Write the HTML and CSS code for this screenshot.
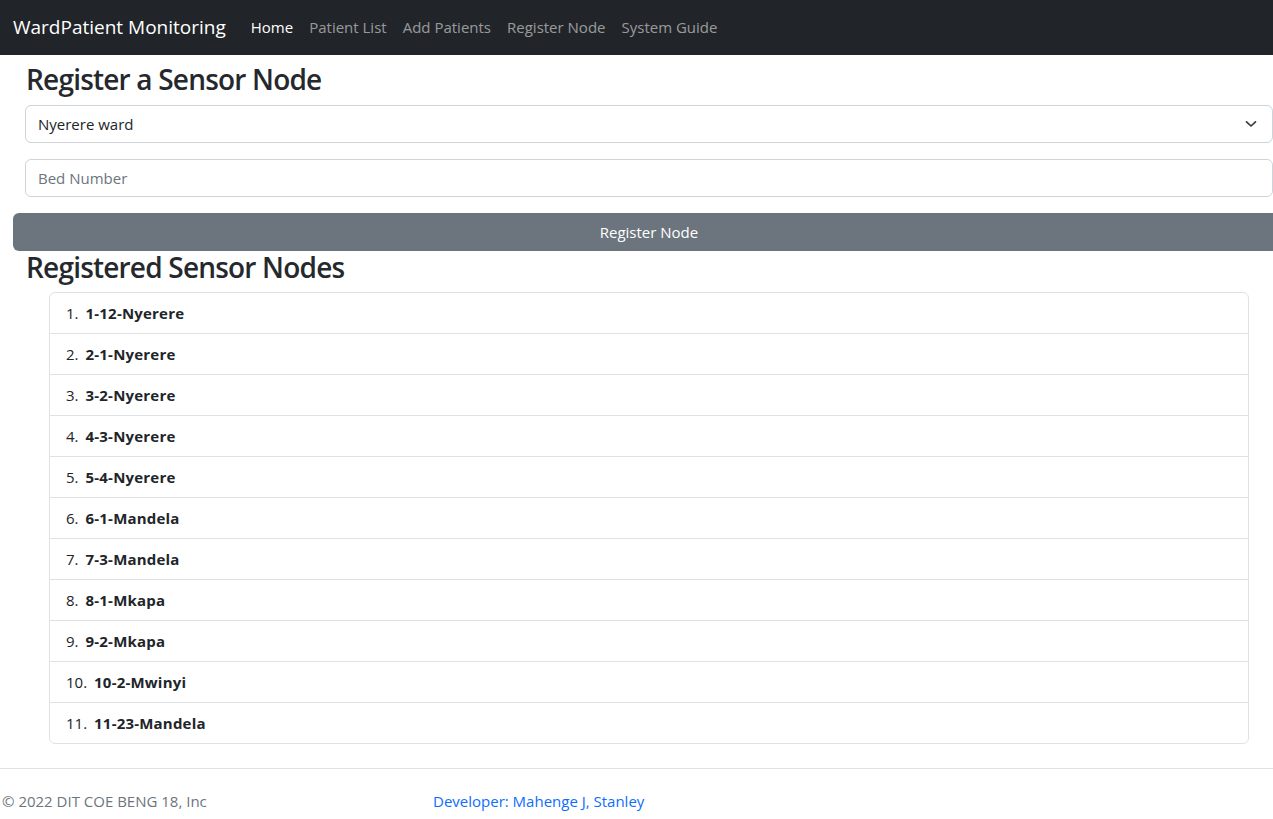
FILE: index.html
```html
<!DOCTYPE html>
<html lang="en">
<head>
<meta charset="utf-8">
<title>WardPatient Monitoring</title>
<link rel="stylesheet" href="styles.css">
</head>
<body>
<nav class="navbar">
  <span class="brand">WardPatient Monitoring</span>
  <ul class="nav">
    <li><a class="nav-link active">Home</a></li>
    <li><a class="nav-link">Patient List</a></li>
    <li><a class="nav-link">Add Patients</a></li>
    <li><a class="nav-link">Register Node</a></li>
    <li><a class="nav-link">System Guide</a></li>
  </ul>
</nav>
<main class="main">
  <section class="form-area">
    <h2 class="title">Register a Sensor Node</h2>
    <div class="select">
      <span>Nyerere ward</span>
      <svg class="chev" width="12" height="8" viewBox="0 0 12 8"><path d="M1.5 1.8l4.5 4.2 4.5-4.2" fill="none" stroke="#343a40" stroke-width="1.7" stroke-linecap="round" stroke-linejoin="round"/></svg>
    </div>
    <div class="input">Bed Number</div>
  </section>
  <div class="btn">Register Node</div>
  <section class="list-area">
    <h2 class="title title-list">Registered Sensor Nodes</h2>
    <ol class="list">
      <li><span class="num">1.</span><b>1-12-Nyerere</b></li>
      <li><span class="num">2.</span><b>2-1-Nyerere</b></li>
      <li><span class="num">3.</span><b>3-2-Nyerere</b></li>
      <li><span class="num">4.</span><b>4-3-Nyerere</b></li>
      <li><span class="num">5.</span><b>5-4-Nyerere</b></li>
      <li><span class="num">6.</span><b>6-1-Mandela</b></li>
      <li><span class="num">7.</span><b>7-3-Mandela</b></li>
      <li><span class="num">8.</span><b>8-1-Mkapa</b></li>
      <li><span class="num">9.</span><b>9-2-Mkapa</b></li>
      <li><span class="num">10.</span><b>10-2-Mwinyi</b></li>
      <li><span class="num">11.</span><b>11-23-Mandela</b></li>
    </ol>
  </section>
</main>
<footer class="footer">
  <span class="copy">© 2022 DIT COE BENG 18, Inc</span>
  <a class="dev">Developer: Mahenge J, Stanley</a>
</footer>
</body>
</html>
```
FILE: styles.css
```css
* { box-sizing: border-box; }
html, body { margin: 0; padding: 0; }
body {
  font-family: "Open Sans", "Noto Sans", sans-serif;
  font-size: 15px;
  line-height: 1.5;
  color: #212529;
  background: #fff;
  width: 1273px;
  overflow: hidden;
}
.navbar {
  height: 55px;
  background: #212529;
  display: flex;
  align-items: center;
  padding: 0 13px;
}
.brand {
  color: #fff;
  font-size: 19px;
  margin-right: 17px;
  white-space: nowrap;
}
.nav {
  display: flex;
  list-style: none;
  margin: 0;
  padding: 0;
}
.nav-link {
  display: block;
  padding: 8px;
  color: rgba(255,255,255,.55);
  font-size: 15px;
  white-space: nowrap;
}
.nav-link.active { color: #fff; }
.main { display: flex; flex-direction: column; }
.form-area { padding: 5px 0 0 25px; }
.title {
  font-size: 28px;
  font-weight: 600;
  letter-spacing: -0.8px;
  line-height: 38px;
  margin: 0 0 7px 1px;
  height: 38px;
  white-space: nowrap;
  color: #25292d;
}
.select, .input {
  height: 38px;
  border: 1px solid #ced4da;
  border-radius: 6px;
  display: flex;
  align-items: center;
  padding: 0 12px;
  font-size: 15px;
  margin-bottom: 16px;
}
.select { justify-content: space-between; padding-right: 15px; }
.input { color: #6c757d; }
.btn {
  margin-left: 13px;
  width: 1272px;
  height: 38px;
  background: #6c757d;
  color: #fff;
  border-radius: 6px;
  display: flex;
  align-items: center;
  justify-content: center;
  font-size: 15px;
  flex: none;
}
.list-area { padding: 0 0 0 25px; }
.title-list { margin-top: -3px; margin-bottom: 6px; }
.list {
  list-style: none;
  margin: 0 24px 24px 24px;
  padding: 0;
  border: 1px solid #dee2e6;
  border-radius: 6px;
}
.list li {
  height: 41px;
  padding: 0 16px;
  display: flex;
  align-items: center;
  border-top: 1px solid #dee2e6;
  font-size: 15px;
}
.list li:first-child { border-top: 0; height: 40px; }
.num { margin-right: 7px; }
.list b { font-weight: 700; letter-spacing: 0.2px; }
.footer {
  border-top: 1px solid #dee2e6;
  display: flex;
  align-items: center;
  height: 51px;
  padding-top: 14px;
  font-size: 15px;
}
.copy { color: #6c757d; margin-left: 2px; width: 431px; }
.dev { color: #0d6efd; }
```
